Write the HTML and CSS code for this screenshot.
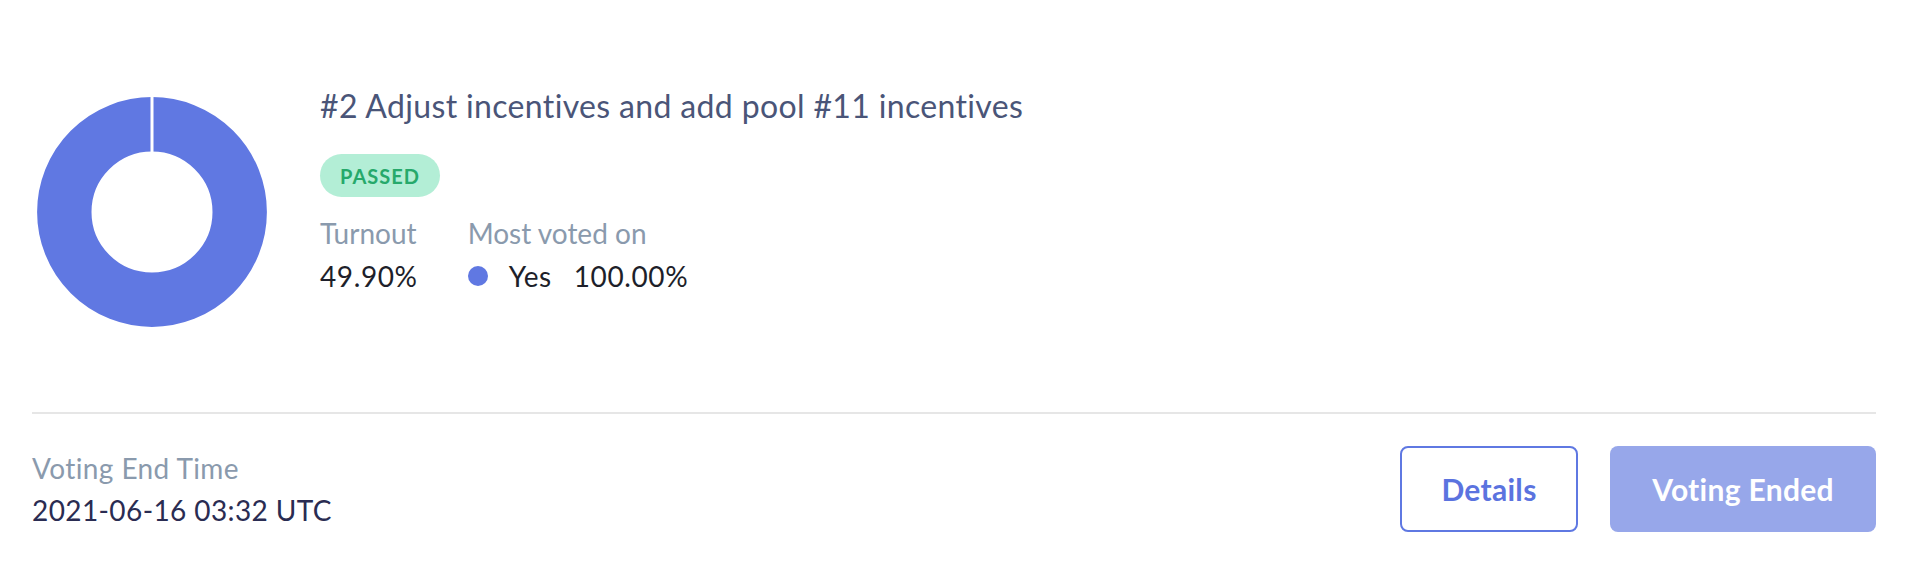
FILE: index.html
```html
<!DOCTYPE html>
<html>
<head>
<meta charset="utf-8">
<link rel="stylesheet" href="styles.css">
</head>
<body>
<div class="card">
  <div class="top">
    <div class="chart">
      <svg width="230" height="230" viewBox="0 0 230 230">
        <circle cx="115" cy="115" r="87.7" fill="none" stroke="#6078e2" stroke-width="54.4"/>
        <rect x="113.5" y="0" width="3" height="56" fill="#ffffff"/>
      </svg>
    </div>
    <div class="info">
      <div class="title">#2 Adjust incentives and add pool #11 incentives</div>
      <div class="badge">PASSED</div>
      <div class="stats">
        <div class="stat">
          <div class="label">Turnout</div>
          <div class="value">49.90%</div>
        </div>
        <div class="stat">
          <div class="label">Most voted on</div>
          <div class="value vote">
            <span class="dot"></span>
            <span class="opt">Yes</span>
            <span>100.00%</span>
          </div>
        </div>
      </div>
    </div>
  </div>
  <div class="divider"></div>
  <div class="bottom">
    <div class="end">
      <div class="label">Voting End Time</div>
      <div class="date">2021-06-16 03:32 UTC</div>
    </div>
    <div class="actions">
      <button class="btn btn-outline">Details</button>
      <button class="btn btn-filled">Voting Ended</button>
    </div>
  </div>
</div>
</body>
</html>
```

FILE: styles.css
```css
* { box-sizing: border-box; }
html, body { margin: 0; padding: 0; background: #ffffff; }
body {
  font-family: "Lato", "Open Sans", sans-serif;
  width: 1916px;
  height: 574px;
  overflow: hidden;
}
.card {
  padding: 87px 40px 0 32px;
}
.top {
  display: flex;
  align-items: flex-start;
  padding-bottom: 85px;
}
.chart {
  margin-left: 5px;
  margin-top: 10px;
  width: 230px;
  height: 230px;
}
.chart svg { display: block; }
.info {
  margin-left: 53px;
  display: flex;
  flex-direction: column;
  align-items: flex-start;
}
.title {
  font-size: 32px;
  line-height: 38px;
  letter-spacing: 0.35px;
  color: #4a5578;
}
.badge {
  margin-top: 29px;
  height: 43px;
  width: 120px;
  border-radius: 22px;
  background: #b3eed6;
  color: #26a96b;
  font-weight: 700;
  font-size: 20px;
  letter-spacing: 1px;
  display: flex;
  align-items: center;
  justify-content: center;
}
.stats {
  margin-top: 19px;
  display: flex;
  gap: 50px;
}
.label {
  font-size: 28px;
  line-height: 34px;
  color: #8a9aad;
}
.value {
  margin-top: 9px;
  font-size: 28px;
  line-height: 34px;
  letter-spacing: 0.6px;
  color: #1e1f2a;
}
.vote {
  display: flex;
  align-items: center;
}
.dot {
  width: 20px;
  height: 20px;
  border-radius: 50%;
  background: #6078e2;
  margin-right: 21px;
}
.opt { margin-right: 22px; }
.divider {
  height: 2px;
  background: #e6e6e6;
}
.bottom {
  display: flex;
  justify-content: space-between;
  align-items: center;
  padding-top: 32px;
}
.end .label {
  line-height: 34px;
  letter-spacing: 0.4px;
}
.date {
  margin-top: 8px;
  font-size: 28px;
  line-height: 34px;
  letter-spacing: 0.4px;
  color: #2a2c52;
}
.actions {
  display: flex;
  gap: 32px;
}
.btn {
  height: 86px;
  border-radius: 8px;
  font-family: "Lato", "Open Sans", sans-serif;
  font-weight: 700;
  font-size: 30px;
  letter-spacing: 0.3px;
  display: flex;
  align-items: center;
  justify-content: center;
  padding: 0;
  cursor: pointer;
}
.btn-outline {
  width: 178px;
  background: #ffffff;
  border: 2px solid #5f78e2;
  color: #5b73df;
}
.btn-filled {
  width: 266px;
  background: #97a7ea;
  border: none;
  color: #ffffff;
}
```
